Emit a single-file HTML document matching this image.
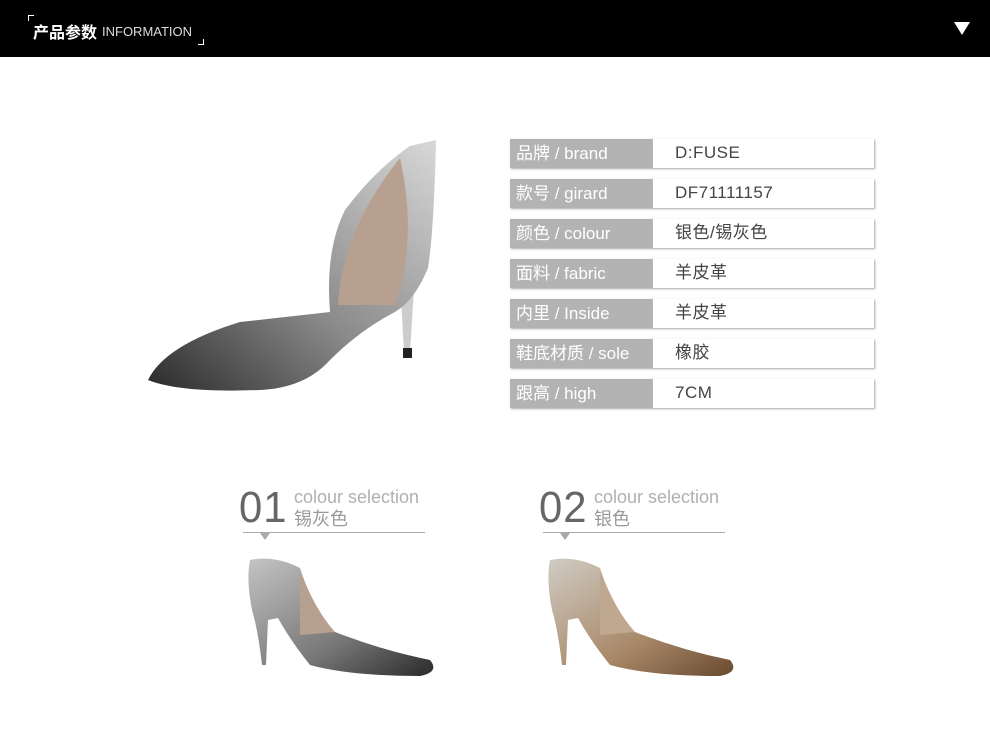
<!DOCTYPE html>
<html><head><meta charset="utf-8"><style>
*{margin:0;padding:0;box-sizing:border-box}
body{width:990px;height:736px;background:#fff;position:relative;overflow:hidden;font-family:"Liberation Sans","Noto Sans CJK SC",sans-serif}
.top{position:absolute;left:0;top:0;width:990px;height:57px;background:#000}
.t1{position:absolute;left:33px;top:19px;color:#fff;font-size:16px;font-weight:bold}
.t2{position:absolute;left:102px;top:24px;color:#ddd;font-size:13px}
.row{position:absolute;left:510px;width:364px;height:29px;box-shadow:1px 1px 2px rgba(0,0,0,.35);background:#fff}
.row .l{position:absolute;left:0;top:0;width:143px;height:29px;background:#b3b3b3;color:#fff;font-size:17px;line-height:29px;padding-left:6px}
.row .v{position:absolute;left:165px;top:0;line-height:27px;font-size:17px;color:#444;letter-spacing:.5px}
.num{position:absolute;font-size:44px;color:#666;letter-spacing:1px;transform:scaleX(.95);transform-origin:left}
.cs{position:absolute;font-size:18px;color:#b0b0b0}
.cn{position:absolute;font-size:18px;color:#999}
.line{position:absolute;height:1px;background:#aaa;width:182px}
.tri{position:absolute;width:0;height:0;border-left:5px solid transparent;border-right:5px solid transparent;border-top:7px solid #aaa}
</style></head><body>
<div class="top">
<div style="position:absolute;left:28px;top:15px;width:6px;height:6px;border-left:1px solid #fff;border-top:1px solid #fff"></div>
<div style="position:absolute;left:198px;top:39px;width:6px;height:6px;border-right:1px solid #fff;border-bottom:1px solid #fff"></div>
<div class="t1">产品参数</div><div class="t2">INFORMATION</div>
<div style="position:absolute;left:954px;top:22px;border-left:8px solid transparent;border-right:8px solid transparent;border-top:13px solid #fff"></div>
</div>
<svg width="990" height="736" style="position:absolute;left:0;top:0">
<defs>
<linearGradient id="g1" x1="0" x2="1" y1="1" y2="0"><stop offset="0" stop-color="#2a2a2a"/><stop offset=".45" stop-color="#8a8a8a"/><stop offset="1" stop-color="#d8d8d8"/></linearGradient>
<linearGradient id="g2" x1="0" x2="1" y1="0" y2="1"><stop offset="0" stop-color="#c4c4c4"/><stop offset=".6" stop-color="#777"/><stop offset="1" stop-color="#2a2a2a"/></linearGradient>
<linearGradient id="g3" x1="0" x2="1" y1="0" y2="1"><stop offset="0" stop-color="#d0ccc4"/><stop offset=".6" stop-color="#a88868"/><stop offset="1" stop-color="#6a4a30"/></linearGradient>
</defs>
<path d="M400 280 L415 272 L410 352 L404 352Z" fill="#ccc"/>
<rect x="403" y="348" width="9" height="10" fill="#222"/>
<path d="M148 380 Q165 345 240 322 L330 312 Q325 250 345 210 Q375 170 410 146 L436 140 Q434 230 428 268 Q415 300 395 312 Q360 330 330 360 Q305 388 260 390 Q180 393 148 380Z" fill="url(#g1)"/>
<path d="M338 305 Q342 230 400 158 Q418 240 395 305Z" fill="#b8a090"/>
<path d="M250 560 Q275 555 300 568 Q310 600 330 630 Q380 650 430 660 Q440 672 420 676 Q350 676 310 665 Q290 640 278 618 L268 620 L266 665 L262 665 Q258 630 252 610 Q246 580 250 560Z" fill="url(#g2)"/>
<path d="M300 570 Q315 610 335 632 L300 635Z" fill="#b8a090"/>
<path d="M550 560 Q575 555 600 568 Q610 600 630 630 Q680 650 730 660 Q740 672 720 676 Q650 676 610 665 Q590 640 578 618 L568 620 L566 665 L562 665 Q558 630 552 610 Q546 580 550 560Z" fill="url(#g3)"/>
<path d="M600 570 Q615 610 635 632 L600 635Z" fill="#c0a890"/>
</svg>
<div class="row" style="top:139px"><div class="l">品牌 / brand</div><div class="v">D:FUSE</div></div>
<div class="row" style="top:179px"><div class="l">款号 / girard</div><div class="v">DF71111157</div></div>
<div class="row" style="top:219px"><div class="l">颜色 / colour</div><div class="v">银色/锡灰色</div></div>
<div class="row" style="top:259px"><div class="l">面料 / fabric</div><div class="v">羊皮革</div></div>
<div class="row" style="top:299px"><div class="l">内里 / Inside</div><div class="v">羊皮革</div></div>
<div class="row" style="top:339px"><div class="l">鞋底材质 / sole</div><div class="v">橡胶</div></div>
<div class="row" style="top:379px"><div class="l">跟高 / high</div><div class="v">7CM</div></div>
<div class="num" style="left:239px;top:483px">01</div>
<div class="cs" style="left:294px;top:487px">colour selection</div>
<div class="cn" style="left:294px;top:505px">锡灰色</div>
<div class="line" style="left:243px;top:532px"></div><div class="tri" style="left:260px;top:533px"></div>
<div class="num" style="left:539px;top:483px">02</div>
<div class="cs" style="left:594px;top:487px">colour selection</div>
<div class="cn" style="left:594px;top:505px">银色</div>
<div class="line" style="left:543px;top:532px"></div><div class="tri" style="left:560px;top:533px"></div>
</body></html>
